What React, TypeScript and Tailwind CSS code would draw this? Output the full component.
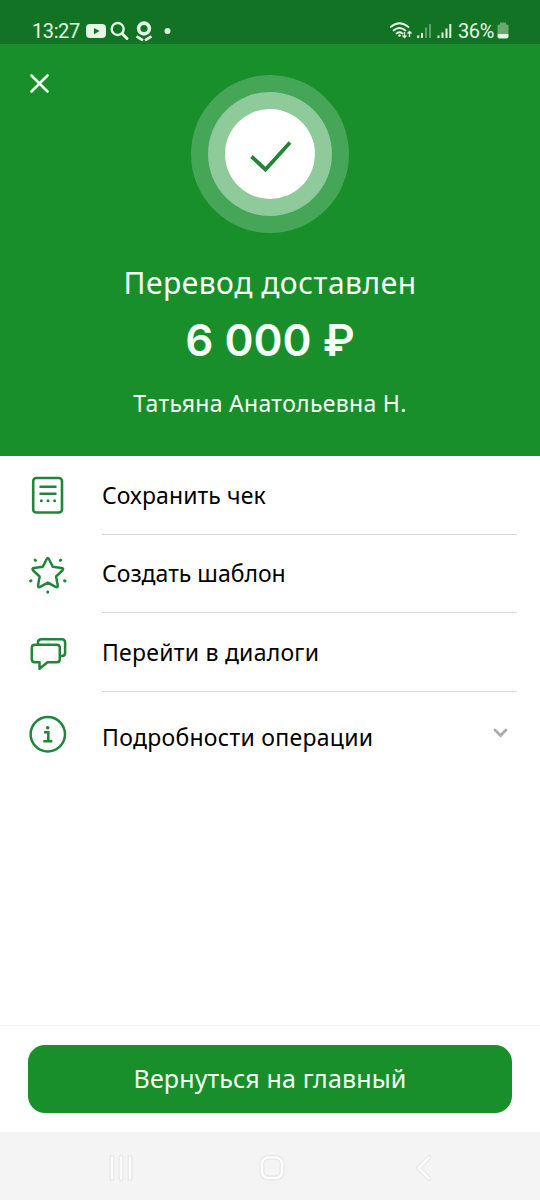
import type { ReactNode } from 'react'

function StatusBar() {
    return (
        <div className="h-11 w-full bg-[#137324] text-[#e4f8e4]">
            <div className="flex h-full items-center justify-between pt-[18px] pr-[31px] pb-[1px] pl-8">
                <div className="flex items-center">
                    <span className="w-[54px] font-[Roboto,sans-serif] text-[20px] leading-none tracking-[-0.4px] whitespace-nowrap">13:27</span>
                    <svg className="h-6 w-[88px]" viewBox="86 19 88 24" fill="none">
                        <path fillRule="evenodd" fill="currentColor" d="M90 24h12q4 0 4 4v6q0 4-4 4H90q-4 0-4-4v-6q0-4 4-4Zm4 4v6.2l5.5-3.1Z" />
                        <circle cx="117.700" cy="29" r="6" stroke="currentColor" strokeWidth="2.400" />
                        <path d="m122 33.500 5 5" stroke="currentColor" strokeWidth="3" strokeLinecap="round" />
                        <circle cx="144" cy="28.500" r="5.400" stroke="currentColor" strokeWidth="3.600" />
                        <path d="m136.500 36.300 6.500 4M151.500 36.300l-6.500 4" stroke="currentColor" strokeWidth="2.600" />
                        <circle cx="167.500" cy="31" r="3" fill="currentColor" />
                    </svg>
                </div>
                <div className="flex items-center">
                    <svg className="h-6 w-[66px]" viewBox="390 19 66 24" fill="none" stroke="currentColor">
                        <path d="M390.500 27q9-7.500 18 0M393.500 30.500q6-5 12 0M396.500 33.500q3-2.500 6 0" strokeWidth="1.700" strokeLinecap="round" />
                        <circle cx="399.500" cy="35.500" r="1.200" fill="currentColor" stroke="none" />
                        <path d="M404.500 32v5.500m-2-2 2 2 2-2M409.500 37v-5.500m-2 2 2-2 2 2" strokeWidth="1.300" />
                        <path d="M418.200 38v-2.500M422 38v-5" strokeWidth="2" />
                        <path d="M426 38V27.500M430 38V24" strokeWidth="1.600" opacity=".45" />
                        <path d="M438.500 38v-2.500M442.500 38v-5.500M446.500 38V28.500M450.300 38V24" strokeWidth="2" />
                    </svg>
                    <span className="w-[41px] pl-[2px] font-[Roboto,sans-serif] text-[20px] leading-none tracking-[-0.4px]">36%</span>
                    <svg className="h-6 w-[12px]" viewBox="497 19 12 24">
                        <path d="M500 22.500h6v2h1q1.500 0 1.500 1.500V34h-11v-8q0-1.500 1.500-1.500h1Z" fill="#6aa86f" />
                        <path d="M497.500 34h11v2.500q0 2-2 2h-7q-2 0-2-2Z" fill="currentColor" />
                    </svg>
                </div>
            </div>
        </div>
    )
}

function SuccessBadge() {
    return (
        <div className="flex size-[158px] items-center justify-center rounded-full bg-[#45a657]">
            <div className="flex size-[124px] items-center justify-center rounded-full bg-[#8fca9a]">
                <div className="flex size-[90px] items-center justify-center rounded-full bg-white">
                    <svg className="size-[90px]" viewBox="225 109 90 90" fill="none">
                        <path d="m251.500 156.500 14 13 24.500-27" stroke="#218639" strokeWidth="3.800" />
                    </svg>
                </div>
            </div>
        </div>
    )
}

function ReceiptIcon() {
    return (
        <svg className="size-10" viewBox="28 475.500 40 40" fill="none" stroke="#218639">
            <rect x="33.200" y="478.500" width="28.800" height="34.500" rx="3" strokeWidth="2.600" />
            <path d="M39.500 487.300h17M39.500 494.200h17" strokeWidth="2.600" />
            <path d="M41.300 501.300h.01M48 501.300h.01M54.600 501.300h.01" strokeWidth="3" strokeLinecap="round" />
        </svg>
    )
}

function StarIcon() {
    return (
        <svg className="size-10" viewBox="28 554 40 40" fill="none" stroke="#218639" strokeLinecap="round" strokeLinejoin="round">
            <path d="M46.600 559.200q1.200-2.400 2.400 0l3.800 7.600 8.800 1.300q2.600.5.800 2.400l-6.300 6 1.600 8.800q.3 2.600-2.100 1.500l-7.700-4.200-7.800 4.200q-2.400 1.100-2-1.500l1.500-8.800-6.400-6q-1.800-1.900.8-2.400l8.800-1.300Z" strokeWidth="2.500" />
            <path d="m35 560 .5.500m24.800 0 .5-.5M30.500 581l.6-.3m33.400 0 .6.300M47.700 592v.300" strokeWidth="2.800" />
        </svg>
    )
}

function ChatIcon() {
    return (
        <svg className="size-10" viewBox="28 633 40 40" fill="none" stroke="#218639" strokeWidth="2.500" strokeLinejoin="round">
            <path d="M34.800 645.800h22q3 0 3 3v11.500q0 3-3 3h-9.300l-8 6.500V663.300h-4.700q-3 0-3-3v-11.500q0-3 3-3Z" />
            <path d="M38 645.500v-2q0-3.300 3.300-3.300h20.500q3.300 0 3.300 3.300v10.200q0 3.300-3.300 3.300h-1.600" />
        </svg>
    )
}

function InfoIcon() {
    return (
        <svg className="size-10" viewBox="28 714 40 40" fill="none" stroke="#218639">
            <circle cx="47.800" cy="734.200" r="17.200" strokeWidth="2.500" />
            <circle cx="47.700" cy="727.700" r="1.800" fill="#218639" stroke="none" />
            <path d="M44 732.300h4.300v9M43.300 741.200h9" strokeWidth="2.500" />
        </svg>
    )
}

function ActionRow({ icon, label }: { icon: ReactNode; label: ReactNode }) {
    return (
        <li className="flex pr-[23px] pl-7">
            <div className="mr-[34px] flex h-[78px] items-center">{icon}</div>
            <div className="flex h-[78.600px] flex-1 items-center border-b border-[#d9d9d9]">{label}</div>
        </li>
    )
}

export default function App() {
    return (
        <main className="flex h-[1200px] w-[540px] flex-col overflow-hidden bg-white font-['Noto_Sans',sans-serif] text-black">
            <StatusBar />
            <header className="flex h-[412px] w-full flex-col bg-[#188f2b] text-[#f5fff5]">
                <div className="flex h-[189px] px-[29px] pt-[29px]">
                    <button className="flex size-[21px] items-center justify-center" aria-label="Закрыть">
                        <svg className="size-[21px]" viewBox="0 0 21 21" fill="none">
                            <path d="m2.500 2.500 16 16m0-16-16 16" stroke="currentColor" strokeWidth="2.600" strokeLinecap="round" />
                        </svg>
                    </button>
                    <div className="ml-[141px] pt-[2px]">
                        <SuccessBadge />
                    </div>
                </div>
                <div className="flex flex-col items-center whitespace-nowrap">
                    <h1 className="mt-[28px] text-[30px] leading-[44px] tracking-[0.5px]">Перевод доставлен</h1>
                    <p className="mt-[5px] font-[Inter,sans-serif] text-[44px] leading-[60px] font-semibold">6 000 ₽</p>
                    <p className="mt-[18px] text-[23px] leading-[30px] tracking-[0.3px]">Татьяна Анатольевна Н.</p>
                </div>
            </header>
            <ul className="h-[235px]">
                <ActionRow icon={<ReceiptIcon />} label={<span className="text-[23px] tracking-[0.1px]">Сохранить чек</span>} />
                <ActionRow icon={<StarIcon />} label={<span className="text-[23px]">Создать шаблон</span>} />
                <ActionRow icon={<ChatIcon />} label={<span className="text-[23px] tracking-[0.25px]">Перейти в диалоги</span>} />
            </ul>
            <div className="flex h-[86px] items-center pr-[31px] pl-7">
                <InfoIcon />
                <span className="ml-[34px] pt-[6px] text-[23px] tracking-[0.3px]">Подробности операции</span>
                <svg className="ml-auto h-3 w-4" viewBox="0 0 16 12" fill="none">
                    <path d="m2 2 5.500 5.500L13 2" stroke="#aaa" strokeWidth="2.800" strokeLinecap="round" />
                </svg>
            </div>
            <footer className="mt-auto h-[107px] border-t border-[#f5f5f5] px-7 pt-[19px]">
                <button className="flex h-[68px] w-full items-center justify-center rounded-[17px] bg-[#188f2b] text-[25px] tracking-[0.150px] text-[#f5fff5]">
                    <span>Вернуться на главный</span>
                </button>
            </footer>
            <nav className="h-[68px] shrink-0 bg-[#f4f4f4]">
                <svg className="h-[68px] w-[540px]" viewBox="0 1132 540 68" fill="none" strokeLinecap="round" strokeLinejoin="round">
                    <path d="M112 1157.500v21m9-21v21m9-21v21" stroke="#e5e5e5" strokeWidth="4.800" />
                    <path d="M112 1157.500v21m9-21v21m9-21v21" stroke="#fcfcfc" strokeWidth="2.600" />
                    <rect x="262" y="1157.500" width="20" height="20.500" rx="6" stroke="#e5e5e5" strokeWidth="4.800" />
                    <rect x="262" y="1157.500" width="20" height="20.500" rx="6" stroke="#fcfcfc" strokeWidth="2.600" />
                    <path d="m429 1157.500-10.500 10.500 10.500 10.500" stroke="#e5e5e5" strokeWidth="4.800" />
                    <path d="m429 1157.500-10.500 10.500 10.500 10.500" stroke="#fcfcfc" strokeWidth="2.600" />
                </svg>
            </nav>
        </main>
    )
}
